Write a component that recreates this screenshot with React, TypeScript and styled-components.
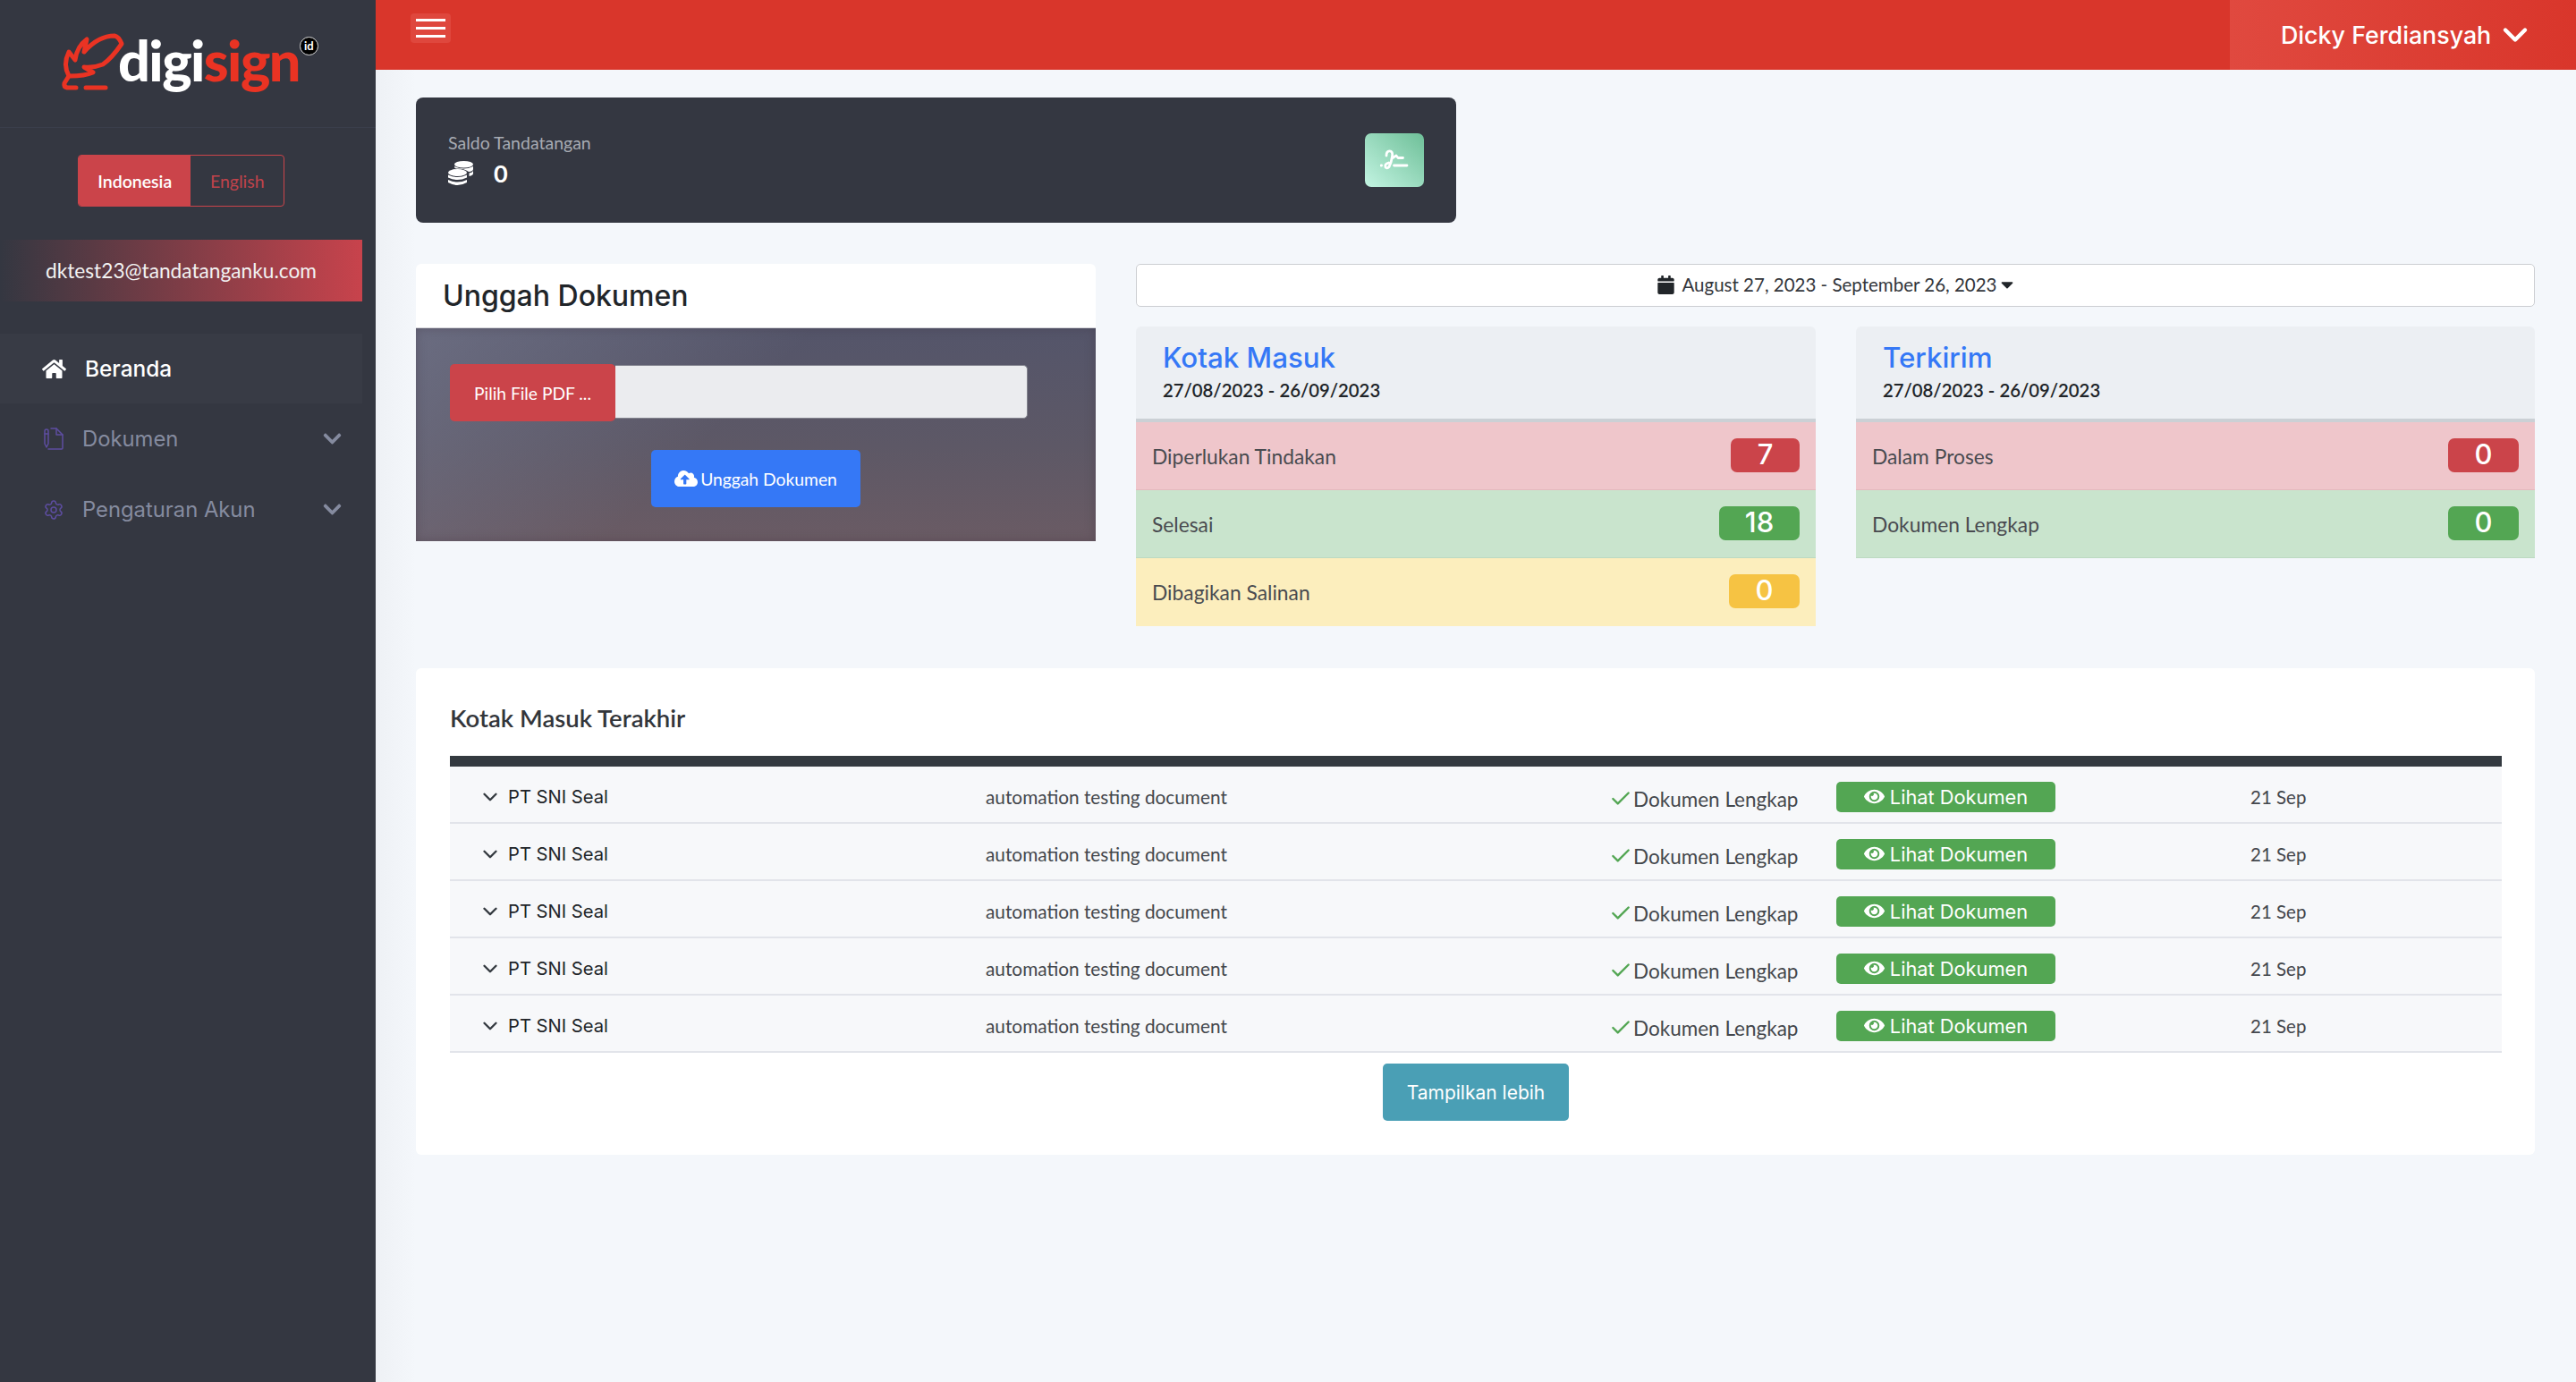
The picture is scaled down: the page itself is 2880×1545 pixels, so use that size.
import React from "react";
import styled, { createGlobalStyle } from "styled-components";
import { FaHome, FaCloudUploadAlt, FaEye, FaCalendar, FaCaretDown, FaChevronDown } from "react-icons/fa";
import { Check, ChevronDown, Settings } from "lucide-react";

const Global = createGlobalStyle`
  html, body { margin: 0; padding: 0; background: #f4f7fb; }
  body { font-family: "Lato", "Liberation Sans", sans-serif; color: #212529; }
  * { box-sizing: border-box; }
`;

const HEAD = `"Inter", "Liberation Sans", sans-serif`;
const RED = "#cb444a";
const GREEN = "#53a653";

const Shell = styled.div`
  display: grid;
  grid-template-columns: 420px 1fr;
  width: 2880px;
  height: 1545px;
  overflow: hidden;
`;

const Sidebar = styled.aside`
  background: #343741;
  display: flex;
  flex-direction: column;
`;
const LogoBar = styled.div`
  height: 143px;
  border-bottom: 1px solid #3a3e4b;
  padding: 30px 0 0 60px;
  display: flex;
  align-items: flex-start;
`;
const LogoMark = styled.svg`
  width: 80px;
  height: 80px;
  flex: none;
`;
const LogoWord = styled.div`
  font-family: "Lato", sans-serif;
  font-weight: 900;
  font-size: 63px;
  line-height: 1;
  letter-spacing: -1.6px;
  margin: 5px 0 0 -8px;
  color: #fff;
  white-space: nowrap;
`;
const LogoRed = styled.span`
  color: #ea3323;
`;
const IdBadge = styled.span`
  flex: none;
  width: 21px;
  height: 21px;
  border-radius: 50%;
  background: #000;
  border: 1px solid #ddd;
  color: #fff;
  font: 700 13px/18px "Lato", sans-serif;
  text-align: center;
  margin: 11px 0 0 0;
`;
const LangGroup = styled.div`
  display: flex;
  width: 231px;
  height: 58px;
  margin: 30px 0 0 87px;
  border-radius: 4px;
  border: 1px solid ${RED};
  overflow: hidden;
`;
const LangBtn = styled.div<{ $on?: boolean }>`
  display: flex;
  align-items: center;
  justify-content: center;
  font-size: 19.5px;
  font-weight: ${(p) => (p.$on ? 600 : 400)};
  width: ${(p) => (p.$on ? "126px" : "104px")};
  background: ${(p) => (p.$on ? RED : "transparent")};
  color: ${(p) => (p.$on ? "#fff" : "#c0434b")};
`;
const EmailBar = styled.div`
  width: 405px;
  height: 69px;
  margin-top: 37px;
  padding-left: 51px;
  display: flex;
  align-items: center;
  color: #f2f2f2;
  font-size: 22.7px;
  background: linear-gradient(to right, #343741 0%, #c8434c 100%);
`;
const Menu = styled.nav`
  margin-top: 36px;
  display: flex;
  flex-direction: column;
`;
const MenuItem = styled.div<{ $on?: boolean }>`
  width: ${(p) => (p.$on ? "405px" : "420px")};
  height: ${(p) => (p.$on ? "78px" : "79px")};
  padding: 0 37px 0 ${(p) => (p.$on ? "47px" : "48px")};
  display: flex;
  align-items: center;
  background: ${(p) => (p.$on ? "#383b45" : "transparent")};
  color: ${(p) => (p.$on ? "#fff" : "#858b9f")};
  font-family: ${HEAD};
  font-size: ${(p) => (p.$on ? "24.4px" : "23.8px")};
  font-weight: ${(p) => (p.$on ? 500 : 400)};
`;
const MenuIcon = styled.span<{ $gap: number }>`
  display: flex;
  width: 27px;
  margin-right: ${(p) => p.$gap}px;
  color: #5d4da0;
  flex: none;
`;
const MenuText = styled.span`
  flex: 1;
`;

const Main = styled.main`
  display: flex;
  flex-direction: column;
  background: linear-gradient(to right, #eef1f5 0, #f4f7fb 45px);
`;
const Topbar = styled.header`
  height: 78px;
  background: #d9362b;
  display: flex;
  justify-content: space-between;
  padding-left: 39px;
`;
const Burger = styled.button`
  width: 45px;
  height: 33px;
  margin-top: 15px;
  padding: 6px;
  border: 0;
  border-radius: 4px;
  background: #df473d;
  display: flex;
  flex-direction: column;
  justify-content: space-between;
`;
const BurgerLine = styled.span`
  display: block;
  height: 3px;
  background: #fff;
`;
const UserArea = styled.div`
  width: 387px;
  background: linear-gradient(to right, #e0493f, #d9362b);
  display: flex;
  align-items: center;
  padding-left: 57px;
  gap: 5px;
  color: #fff;
  font: 500 26.8px ${HEAD};
  white-space: nowrap;
`;
const Content = styled.div`
  padding: 31px 46px 0 45px;
  display: flex;
  flex-direction: column;
`;
const SaldoCard = styled.section`
  width: 1163px;
  height: 140px;
  border-radius: 8px;
  background: #343741;
  display: flex;
  align-items: center;
  justify-content: space-between;
  padding: 0 36px;
`;
const SaldoLabel = styled.div`
  color: #a7abb3;
  font-size: 19.5px;
  line-height: 24px;
  margin: -2px 0 7px;
`;
const SaldoValue = styled.div`
  display: flex;
  align-items: center;
  gap: 23px;
  color: #fff;
  font: 700 27px/30px "Lato", sans-serif;
`;
const SaldoIconBox = styled.div`
  width: 66px;
  height: 60px;
  border-radius: 7px;
  background: linear-gradient(to top right, #c3f4e2, #6ebf98);
  display: flex;
  align-items: center;
  justify-content: center;
`;
const Columns = styled.div`
  display: grid;
  grid-template-columns: 760px 1fr;
  gap: 45px;
  margin-top: 46px;
  align-items: start;
`;
const UploadCard = styled.section`
  background: #fff;
  border-radius: 6px 6px 0 0;
  overflow: hidden;
`;
const UploadHead = styled.h2`
  margin: 0;
  height: 72px;
  padding-left: 30px;
  display: flex;
  align-items: center;
  font: 500 32px ${HEAD};
  color: #212529;
  border-bottom: 1px solid #d5d6da;
`;
const UploadBody = styled.div`
  height: 238px;
  padding: 40px 76px 0 38px;
  display: flex;
  flex-direction: column;
  background:
    linear-gradient(135deg, rgba(112, 114, 134, 0.8) 0%, rgba(90, 90, 110, 0) 45%),
    linear-gradient(to bottom, #54556a 0%, #5d5866 55%, #6a5b64 100%);
  box-shadow: inset 0 0 12px rgba(60, 50, 60, 0.35);
`;
const FileRow = styled.div`
  display: flex;
  align-items: flex-start;
`;
const FileBtn = styled.div`
  width: 185px;
  height: 64px;
  background: ${RED};
  border-radius: 5px;
  color: #fff;
  font-size: 19.2px;
  display: flex;
  align-items: center;
  justify-content: center;
  flex: none;
`;
const FileField = styled.div`
  flex: 1;
  height: 60px;
  margin-top: 1px;
  background: #ebecef;
  border: 1px solid #83848e;
  border-left: 0;
  border-radius: 0 5px 5px 0;
`;
const UploadBtn = styled.button`
  width: 234px;
  height: 64px;
  margin: 32px 0 0 225px;
  border: 0;
  border-radius: 5px;
  background: #3578f6;
  color: #fff;
  font: 400 19.3px "Lato", sans-serif;
  display: flex;
  align-items: center;
  justify-content: center;
  gap: 3px;
`;
const Right = styled.div`
  display: flex;
  flex-direction: column;
`;
const DateBar = styled.div`
  height: 48px;
  padding: 0 0 2px 3px;
  background: #fff;
  border: 1px solid #ccced2;
  border-radius: 5px;
  display: flex;
  align-items: center;
  justify-content: center;
  gap: 7px;
  font-size: 20.5px;
  color: #33363b;
`;
const CardPair = styled.div`
  display: grid;
  grid-template-columns: 760px 759px;
  gap: 45px;
  margin-top: 22px;
  align-items: start;
`;
const StatCard = styled.section`
  border-radius: 6px 6px 0 0;
  overflow: hidden;
`;
const StatHead = styled.div`
  height: 107px;
  background: #eceff3;
  border-bottom: 4px solid #cbd0d5;
  padding: 16px 0 0 30px;
`;
const StatTitle = styled.h3`
  margin: 0;
  font: 500 31.3px/39px ${HEAD};
  color: #3578f6;
`;
const StatDates = styled.div`
  font-size: 20.3px;
  font-weight: 600;
  line-height: 26px;
  margin-top: 3px;
  color: #212529;
`;
const TONES = {
  red: { bg: "#efc6cb", line: "#e4b9bd", badge: RED },
  green: { bg: "#c9e4cd", line: "#bcd9c1", badge: GREEN },
  yellow: { bg: "#fceebd", line: "#fceebd", badge: "#f6c343" },
};
type Tone = keyof typeof TONES;
const StatRow = styled.div<{ $tone: Tone }>`
  height: 76px;
  margin-top: 0;
  background: ${(p) => TONES[p.$tone].bg};
  border-bottom: 1px solid ${(p) => TONES[p.$tone].line};
  display: flex;
  align-items: center;
  justify-content: space-between;
  padding: 0 18px;
  font-size: 22.8px;
  color: #494b50;
`;
const StatLabel = styled.span`
  margin-top: 1px;
`;
const Badge = styled.span<{ $tone: Tone; $w: number }>`
  width: ${(p) => p.$w}px;
  height: 38px;
  margin-top: -2px;
  border-radius: 7px;
  background: ${(p) => TONES[p.$tone].badge};
  color: #fff;
  font: 500 31px/35px ${HEAD};
  text-align: center;
`;
const RecentCard = styled.section`
  margin-top: 47px;
  height: 544px;
  background: #fff;
  border-radius: 6px;
  padding: 0 37px 0 38px;
  display: flex;
  flex-direction: column;
`;
const RecentTitle = styled.h2`
  margin: 0;
  height: 98px;
  display: flex;
  align-items: center;
  padding-top: 13px;
  font-size: 27.5px;
  font-weight: 600;
  color: #33363b;
`;
const TableBar = styled.div`
  height: 12px;
  background: #343a40;
`;
const Row = styled.div`
  display: grid;
  grid-template-columns: 567px 697px 254px 463px 1fr;
  height: 64px;
  padding: 5px 0 0 32px;
  align-items: center;
  background: #f7f8fa;
  border-bottom: 2px solid #e2e4ea;
`;
const NameCell = styled.div`
  display: flex;
  align-items: center;
  gap: 7px;
  font: 400 20.2px ${HEAD};
  color: #212529;
`;
const DocCell = styled.div`
  font-size: 20.8px;
  color: #44474c;
`;
const StatusCell = styled.div`
  display: flex;
  align-items: center;
  font-size: 22.5px;
  color: #44474c;
  margin-top: 5px;
  gap: 1px;
`;
const ViewBtn = styled.button`
  width: 245px;
  height: 34px;
  border: 0;
  border-radius: 5px;
  background: ${GREEN};
  color: #fff;
  font: 400 21.8px ${HEAD};
  display: flex;
  align-items: center;
  justify-content: center;
  gap: 6px;
  padding: 0;
`;
const DateCell = styled.div`
  font-size: 20.5px;
  color: #44474c;
`;
const MoreWrap = styled.div`
  display: flex;
  justify-content: center;
  margin-top: 12px;
`;
const MoreBtn = styled.button`
  width: 208px;
  height: 64px;
  border: 0;
  border-radius: 5px;
  background: #4a9fb5;
  color: #fff;
  font: 400 21px ${HEAD};
`;

const LeafLogo = () => (
  <LogoMark viewBox="60 30 80 80" fill="none" stroke="#ea3323" strokeWidth={5} strokeLinecap="round" strokeLinejoin="round">
    <path d="M85 98 L75 98 Q71 97 72 93 L77 85 Q70 72 77 58 L84 67 Q86 52 97 44 L94 58 Q110 40 128 40 Q133 41 136 49 Q125 65 115 72 Q105 76 94 75 L104 81 Q95 85 78 85" />
    <path d="M96 98 L118 98" />
  </LogoMark>
);

const Coins = () => (
  <svg width="28" height="28" viewBox="0 0 28 28" fill="#fff">
    <ellipse cx="17.5" cy="3.8" rx="10.5" ry="3.8" />
    <path d="M7 6 Q17.5 11 28 6 V9 Q28 11.5 23 12 Q18 8.5 9 8.6 Q7.5 8 7 7 Z" />
    <path d="M23.5 13.5 Q27 13 28 11 V14 Q28 16 23.5 17 Z" />
    <ellipse cx="10.5" cy="13" rx="10.5" ry="4" />
    <path d="M0 15.5 Q10.5 20.5 21 15.5 V18.5 Q10.5 23.5 0 18.5 Z" />
    <path d="M0 21 Q10.5 26 21 21 V24 Q10.5 30 0 24 Z" />
  </svg>
);

const Signature = () => (
  <svg width="32" height="24" viewBox="0 0 32 24" fill="none" stroke="#fff" strokeWidth={2.8} strokeLinecap="round" strokeLinejoin="round">
    <path d="M7 7 Q7 1.8 10.5 1.8 Q14.5 1.8 13.5 8 Q12.5 15 10 19.5 Q7.5 22 6 20 Q4.5 16.5 9.5 15" />
    <path d="M14 9.5 L18 7 L20 9.5 H25.5" />
    <path d="M1 18 H1.6 M15.5 18 H30" />
  </svg>
);

const DocPen = () => (
  <svg width="24" height="25" viewBox="0 0 24 25" fill="none" stroke="#5d4da0" strokeWidth={1.5} strokeLinejoin="round" strokeLinecap="round">
    <path d="M9 1 H15 L22 8 V23 Q22 24 21 24 H6" />
    <path d="M15 1 V8 H22" />
    <path d="M2 4 Q2 2 4 2 Q6 2 6 4 V18 L4 22 L2 18 Z" />
    <path d="M2 7 H6" />
  </svg>
);

const rows = [0, 1, 2, 3, 4];

export default function App() {
  return (
    <Shell>
      <Global />
      <Sidebar>
        <LogoBar>
          <LeafLogo />
          <LogoWord>
            digi<LogoRed>sign</LogoRed>
          </LogoWord>
          <IdBadge>id</IdBadge>
        </LogoBar>
        <LangGroup>
          <LangBtn $on>Indonesia</LangBtn>
          <LangBtn>English</LangBtn>
        </LangGroup>
        <EmailBar>dktest23@tandatanganku.com</EmailBar>
        <Menu>
          <MenuItem $on>
            <MenuIcon $gap={21}>
              <FaHome size={27} color="#fff" />
            </MenuIcon>
            <MenuText>Beranda</MenuText>
          </MenuItem>
          <MenuItem>
            <MenuIcon $gap={17}>
              <DocPen />
            </MenuIcon>
            <MenuText>Dokumen</MenuText>
            <FaChevronDown size={23} />
          </MenuItem>
          <MenuItem>
            <MenuIcon $gap={17}>
              <Settings size={24} strokeWidth={1.5} />
            </MenuIcon>
            <MenuText>Pengaturan Akun</MenuText>
            <FaChevronDown size={23} />
          </MenuItem>
        </Menu>
      </Sidebar>
      <Main>
        <Topbar>
          <Burger aria-label="menu">
            <BurgerLine />
            <BurgerLine />
            <BurgerLine />
          </Burger>
          <UserArea>
            Dicky Ferdiansyah
            <ChevronDown size={44} strokeWidth={2.4} />
          </UserArea>
        </Topbar>
        <Content>
          <SaldoCard>
            <div>
              <SaldoLabel>Saldo Tandatangan</SaldoLabel>
              <SaldoValue>
                <Coins />0
              </SaldoValue>
            </div>
            <SaldoIconBox>
              <Signature />
            </SaldoIconBox>
          </SaldoCard>
          <Columns>
            <UploadCard>
              <UploadHead>Unggah Dokumen</UploadHead>
              <UploadBody>
                <FileRow>
                  <FileBtn>Pilih File PDF ...</FileBtn>
                  <FileField />
                </FileRow>
                <UploadBtn>
                  <FaCloudUploadAlt size={26} />
                  Unggah Dokumen
                </UploadBtn>
              </UploadBody>
            </UploadCard>
            <Right>
              <DateBar>
                <FaCalendar size={21} color="#212529" />
                <span>August 27, 2023 - September 26, 2023</span>
                <FaCaretDown size={22} color="#212529" style={{ marginLeft: -7 }} />
              </DateBar>
              <CardPair>
                <StatCard>
                  <StatHead>
                    <StatTitle>Kotak Masuk</StatTitle>
                    <StatDates>27/08/2023 - 26/09/2023</StatDates>
                  </StatHead>
                  <StatRow $tone="red">
                    <StatLabel>Diperlukan Tindakan</StatLabel>
                    <Badge $tone="red" $w={77}>7</Badge>
                  </StatRow>
                  <StatRow $tone="green">
                    <StatLabel>Selesai</StatLabel>
                    <Badge $tone="green" $w={90}>18</Badge>
                  </StatRow>
                  <StatRow $tone="yellow">
                    <StatLabel>Dibagikan Salinan</StatLabel>
                    <Badge $tone="yellow" $w={79}>0</Badge>
                  </StatRow>
                </StatCard>
                <StatCard>
                  <StatHead>
                    <StatTitle>Terkirim</StatTitle>
                    <StatDates>27/08/2023 - 26/09/2023</StatDates>
                  </StatHead>
                  <StatRow $tone="red">
                    <StatLabel>Dalam Proses</StatLabel>
                    <Badge $tone="red" $w={79}>0</Badge>
                  </StatRow>
                  <StatRow $tone="green">
                    <StatLabel>Dokumen Lengkap</StatLabel>
                    <Badge $tone="green" $w={79}>0</Badge>
                  </StatRow>
                </StatCard>
              </CardPair>
            </Right>
          </Columns>
          <RecentCard>
            <RecentTitle>Kotak Masuk Terakhir</RecentTitle>
            <TableBar />
            {rows.map((r) => (
              <Row key={r}>
                <NameCell>
                  <ChevronDown size={26} strokeWidth={2.2} color="#343a40" />
                  PT SNI Seal
                </NameCell>
                <DocCell>automation testing document</DocCell>
                <StatusCell>
                  <Check size={26} strokeWidth={2.2} color={GREEN} />
                  Dokumen Lengkap
                </StatusCell>
                <div>
                  <ViewBtn>
                    <FaEye size={23} />
                    Lihat Dokumen
                  </ViewBtn>
                </div>
                <DateCell>21 Sep</DateCell>
              </Row>
            ))}
            <MoreWrap>
              <MoreBtn>Tampilkan lebih</MoreBtn>
            </MoreWrap>
          </RecentCard>
        </Content>
      </Main>
    </Shell>
  );
}
